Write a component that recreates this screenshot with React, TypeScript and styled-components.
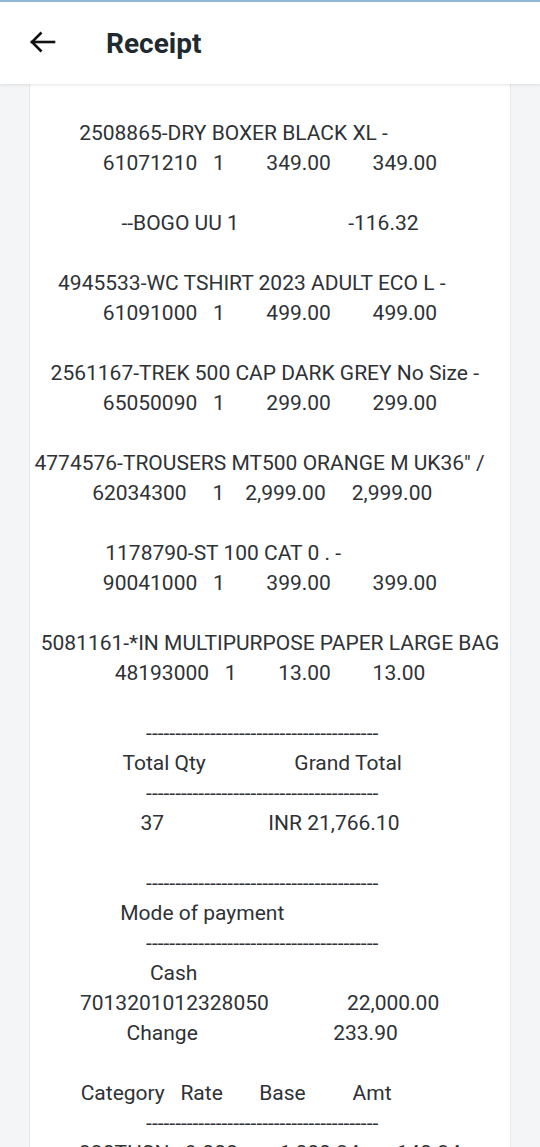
import styled, { createGlobalStyle } from 'styled-components';

const GlobalStyle = createGlobalStyle`
  html, body {
    margin: 0;
    padding: 0;
    background: #f4f5f7;
    font-family: Roboto, "Liberation Sans", sans-serif;
  }
`

const sp = (n: number) => ' '.repeat(n)
const dashes = '-'.repeat(40) + sp(3)

const receiptLines: string[] = [
  '2508865-DRY BOXER BLACK XL -' + sp(14),
  '61071210' + sp(3) + '1' + sp(8) + '349.00' + sp(8) + '349.00',
  '',
  '--BOGO UU 1' + sp(21) + '-116.32',
  '',
  '4945533-WC TSHIRT 2023 ADULT ECO L -' + sp(7),
  '61091000' + sp(3) + '1' + sp(8) + '499.00' + sp(8) + '499.00',
  '',
  '2561167-TREK 500 CAP DARK GREY No Size -' + sp(2),
  '65050090' + sp(3) + '1' + sp(8) + '299.00' + sp(8) + '299.00',
  '',
  '4774576-TROUSERS MT500 ORANGE M UK36" /' + sp(4),
  '62034300' + sp(5) + '1' + sp(4) + '2,999.00' + sp(5) + '2,999.00' + sp(3),
  '',
  '1178790-ST 100 CAT 0 . -' + sp(18),
  '90041000' + sp(3) + '1' + sp(8) + '399.00' + sp(8) + '399.00',
  '',
  '5081161-*IN MULTIPURPOSE PAPER LARGE BAG',
  '48193000' + sp(3) + '1' + sp(8) + '13.00' + sp(8) + '13.00',
  '',
  dashes,
  'Total Qty' + sp(17) + 'Grand Total' + sp(3),
  dashes,
  '37' + sp(20) + 'INR 21,766.10',
  '',
  dashes,
  'Mode of payment' + sp(26),
  dashes,
  'Cash' + sp(37),
  '7013201012328050' + sp(15) + '22,000.00' + sp(4),
  'Change' + sp(26) + '233.90' + sp(3),
  '',
  'Category' + sp(3) + 'Rate' + sp(7) + 'Base' + sp(9) + 'Amt' + sp(13),
  dashes,
  '330THSN' + sp(3) + '9.000' + sp(8) + '1,000.34' + sp(7) + '140.34',
  '330THSN' + sp(3) + '9.000' + sp(8) + '1,000.34' + sp(7) + '140.34',
  '',
]

const BackArrow = () => (
  <svg width="28" height="28" viewBox="0 0 28 28" fill="none" stroke="#111" strokeWidth="2.6" strokeLinecap="square">
    <path d="M4 14H26" />
    <path d="M13.5 4.5L4 14l9.5 9.5" strokeLinecap="butt" />
  </svg>
)

export default function App() {
  return (
    <>
      <GlobalStyle />
      <Page>
        <Header>
          <BackButton aria-label="Back">
            <BackArrow />
          </BackButton>
          <Title>Receipt</Title>
        </Header>
        <Content>
          <Card>
            {receiptLines.map((line, i) => (
              <Line key={i}>{line || ' '}</Line>
            ))}
          </Card>
        </Content>
      </Page>
    </>
  )
}

const Page = styled.div`
  display: flex;
  flex-direction: column;
  min-height: 100vh;
  background: #f4f5f7;
`

const Header = styled.header`
  position: sticky;
  top: 0;
  z-index: 2;
  display: flex;
  align-items: center;
  height: 82px;
  border-top: 2px solid #8fb7d6;
  background: #fff;
  box-shadow: 0 1px 3px rgba(0, 0, 0, 0.1);
`

const BackButton = styled.button`
  display: flex;
  align-items: center;
  justify-content: center;
  width: 28px;
  height: 28px;
  margin-left: 28px;
  margin-top: -2px;
  padding: 0;
  border: none;
  background: none;
  cursor: pointer;
`

const Title = styled.h1`
  margin: 0 0 0 50px;
  font-size: 28px;
  font-weight: 700;
  color: #1f2a30;
`

const Content = styled.main`
  flex: 1;
  padding: 0 29px;
`

const Card = styled.section`
  display: flex;
  flex-direction: column;
  padding-top: 34px;
  background: #fff;
  border-left: 1px solid #e6e7ea;
  border-right: 1px solid #e6e7ea;
`

const Line = styled.div`
  height: 30px;
  line-height: 30px;
  font-size: 21px;
  color: #2e3236;
  text-align: center;
  white-space: pre;
`
